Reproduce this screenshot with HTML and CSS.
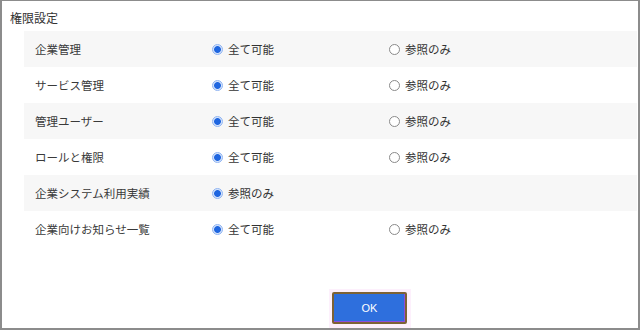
FILE: index.html
```html
<!DOCTYPE html>
<html lang="ja">
<head>
    <meta charset="UTF-8">
    <title>権限設定</title>
    <link rel="stylesheet" href="styles.css">
</head>
<body>
    <div class="dialog">
        <div class="dialog-title">権限設定</div>

        <div class="perm-list">
            <div class="perm-row">
                <div class="perm-name">企業管理</div>
                <div class="perm-option"><span class="radio checked"></span>全て可能</div>
                <div class="perm-option"><span class="radio"></span>参照のみ</div>
            </div>
            <div class="perm-row">
                <div class="perm-name">サービス管理</div>
                <div class="perm-option"><span class="radio checked"></span>全て可能</div>
                <div class="perm-option"><span class="radio"></span>参照のみ</div>
            </div>
            <div class="perm-row">
                <div class="perm-name">管理ユーザー</div>
                <div class="perm-option"><span class="radio checked"></span>全て可能</div>
                <div class="perm-option"><span class="radio"></span>参照のみ</div>
            </div>
            <div class="perm-row">
                <div class="perm-name">ロールと権限</div>
                <div class="perm-option"><span class="radio checked"></span>全て可能</div>
                <div class="perm-option"><span class="radio"></span>参照のみ</div>
            </div>
            <div class="perm-row">
                <div class="perm-name">企業システム利用実績</div>
                <div class="perm-option"><span class="radio checked"></span>参照のみ</div>
            </div>
            <div class="perm-row">
                <div class="perm-name">企業向けお知らせ一覧</div>
                <div class="perm-option"><span class="radio checked"></span>全て可能</div>
                <div class="perm-option"><span class="radio"></span>参照のみ</div>
            </div>
        </div>

        <div class="dialog-footer">
            <div class="button-wrap">
                <button class="ok-button">OK</button>
            </div>
        </div>
    </div>
</body>
</html>
```

FILE: styles.css
```css
body {
    margin: 0;
    background-color: #ffffff;
    font-family: "Noto Sans CJK JP", "Noto Sans", sans-serif;
    color: #333333;
}
.dialog {
    width: 640px;
    height: 330px;
    box-sizing: border-box;
    border: 2px solid #8c8c8c;
    border-top-width: 1px;
    display: flex;
    flex-direction: column;
}
.dialog-title {
    font-size: 12px;
    line-height: 16px;
    padding: 9px 0 5px 8px;
}
.perm-list {
    margin-left: 22px;
    margin-right: 1px;
}
.perm-row {
    display: grid;
    grid-template-columns: 177px 177px 1fr;
    align-items: center;
    height: 36px;
    padding-left: 11px;
    font-size: 11.5px;
}
.perm-row:nth-child(odd) {
    background-color: #f7f7f7;
}
.perm-name {
    color: #3a3a3a;
}
.perm-option {
    display: flex;
    align-items: center;
    gap: 5px;
    color: #333333;
}
.radio {
    width: 9px;
    height: 9px;
    border: 1px solid #8a8a8a;
    border-radius: 50%;
    background-color: #ffffff;
}
.radio.checked {
    border-color: #8fb4f2;
    background: radial-gradient(circle, #1f66e0 0 3px, #d6e4fb 3.8px);
}
.dialog-footer {
    display: flex;
    justify-content: center;
    margin-top: auto;
    padding-left: 100px;
}
.button-wrap {
    background-color: #fdf0fc;
    padding: 3px 4px 4px 3px;
}
.ok-button {
    width: 75px;
    height: 32px;
    box-sizing: border-box;
    border: 2px solid #7d6236;
    background-color: #2e6fdd;
    box-shadow: inset -1px -1px 0 #8a4de0;
    color: #ffffff;
    font-family: "Liberation Sans", Arial, sans-serif;
    font-size: 11px;
    border-radius: 2px;
}
```
